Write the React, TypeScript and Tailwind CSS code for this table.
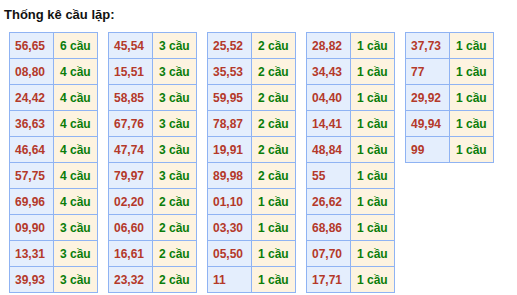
import React from "react";

type Item = [string, number];

const tables: Item[][] = [
  [
    ["56,65", 6], ["08,80", 4], ["24,42", 4], ["36,63", 4], ["46,64", 4],
    ["57,75", 4], ["69,96", 4], ["09,90", 3], ["13,31", 3], ["39,93", 3],
  ],
  [
    ["45,54", 3], ["15,51", 3], ["58,85", 3], ["67,76", 3], ["47,74", 3],
    ["79,97", 3], ["02,20", 2], ["06,60", 2], ["16,61", 2], ["23,32", 2],
  ],
  [
    ["25,52", 2], ["35,53", 2], ["59,95", 2], ["78,87", 2], ["19,91", 2],
    ["89,98", 2], ["01,10", 1], ["03,30", 1], ["05,50", 1], ["11", 1],
  ],
  [
    ["28,82", 1], ["34,43", 1], ["04,40", 1], ["14,41", 1], ["48,84", 1],
    ["55", 1], ["26,62", 1], ["68,86", 1], ["07,70", 1], ["17,71", 1],
  ],
  [
    ["37,73", 1], ["77", 1], ["29,92", 1], ["49,94", 1], ["99", 1],
  ],
];

export default function App() {
  return (
    <div
      className="w-[517px] h-[295px] bg-white overflow-hidden"
      style={{ fontFamily: '"Liberation Sans", Arial, sans-serif' }}
    >
      <h2 className="pl-[4px] pt-[7px] text-[13px] leading-[16px] font-bold text-[#111]">
        Thống kê cầu lặp:
      </h2>
      <div className="flex items-start gap-[10px] pl-[9px] mt-[9px]">
        {tables.map((rows, i) => (
          <table key={i} className="border-collapse">
            <tbody>
              {rows.map(([pair, n]) => (
                <tr key={pair} className="h-[26px]">
                  <td className="w-[44px] border border-[#8fb3f3] bg-[#e4eefd] pl-[5px] text-[12px] font-bold text-[#b4392a]">
                    {pair}
                  </td>
                  <td className="w-[44px] border border-[#8fb3f3] bg-[#fdf3e0] pl-[6px] text-[12px] font-bold text-[#0a7d0a]">
                    {n} cầu
                  </td>
                </tr>
              ))}
            </tbody>
          </table>
        ))}
      </div>
    </div>
  );
}
